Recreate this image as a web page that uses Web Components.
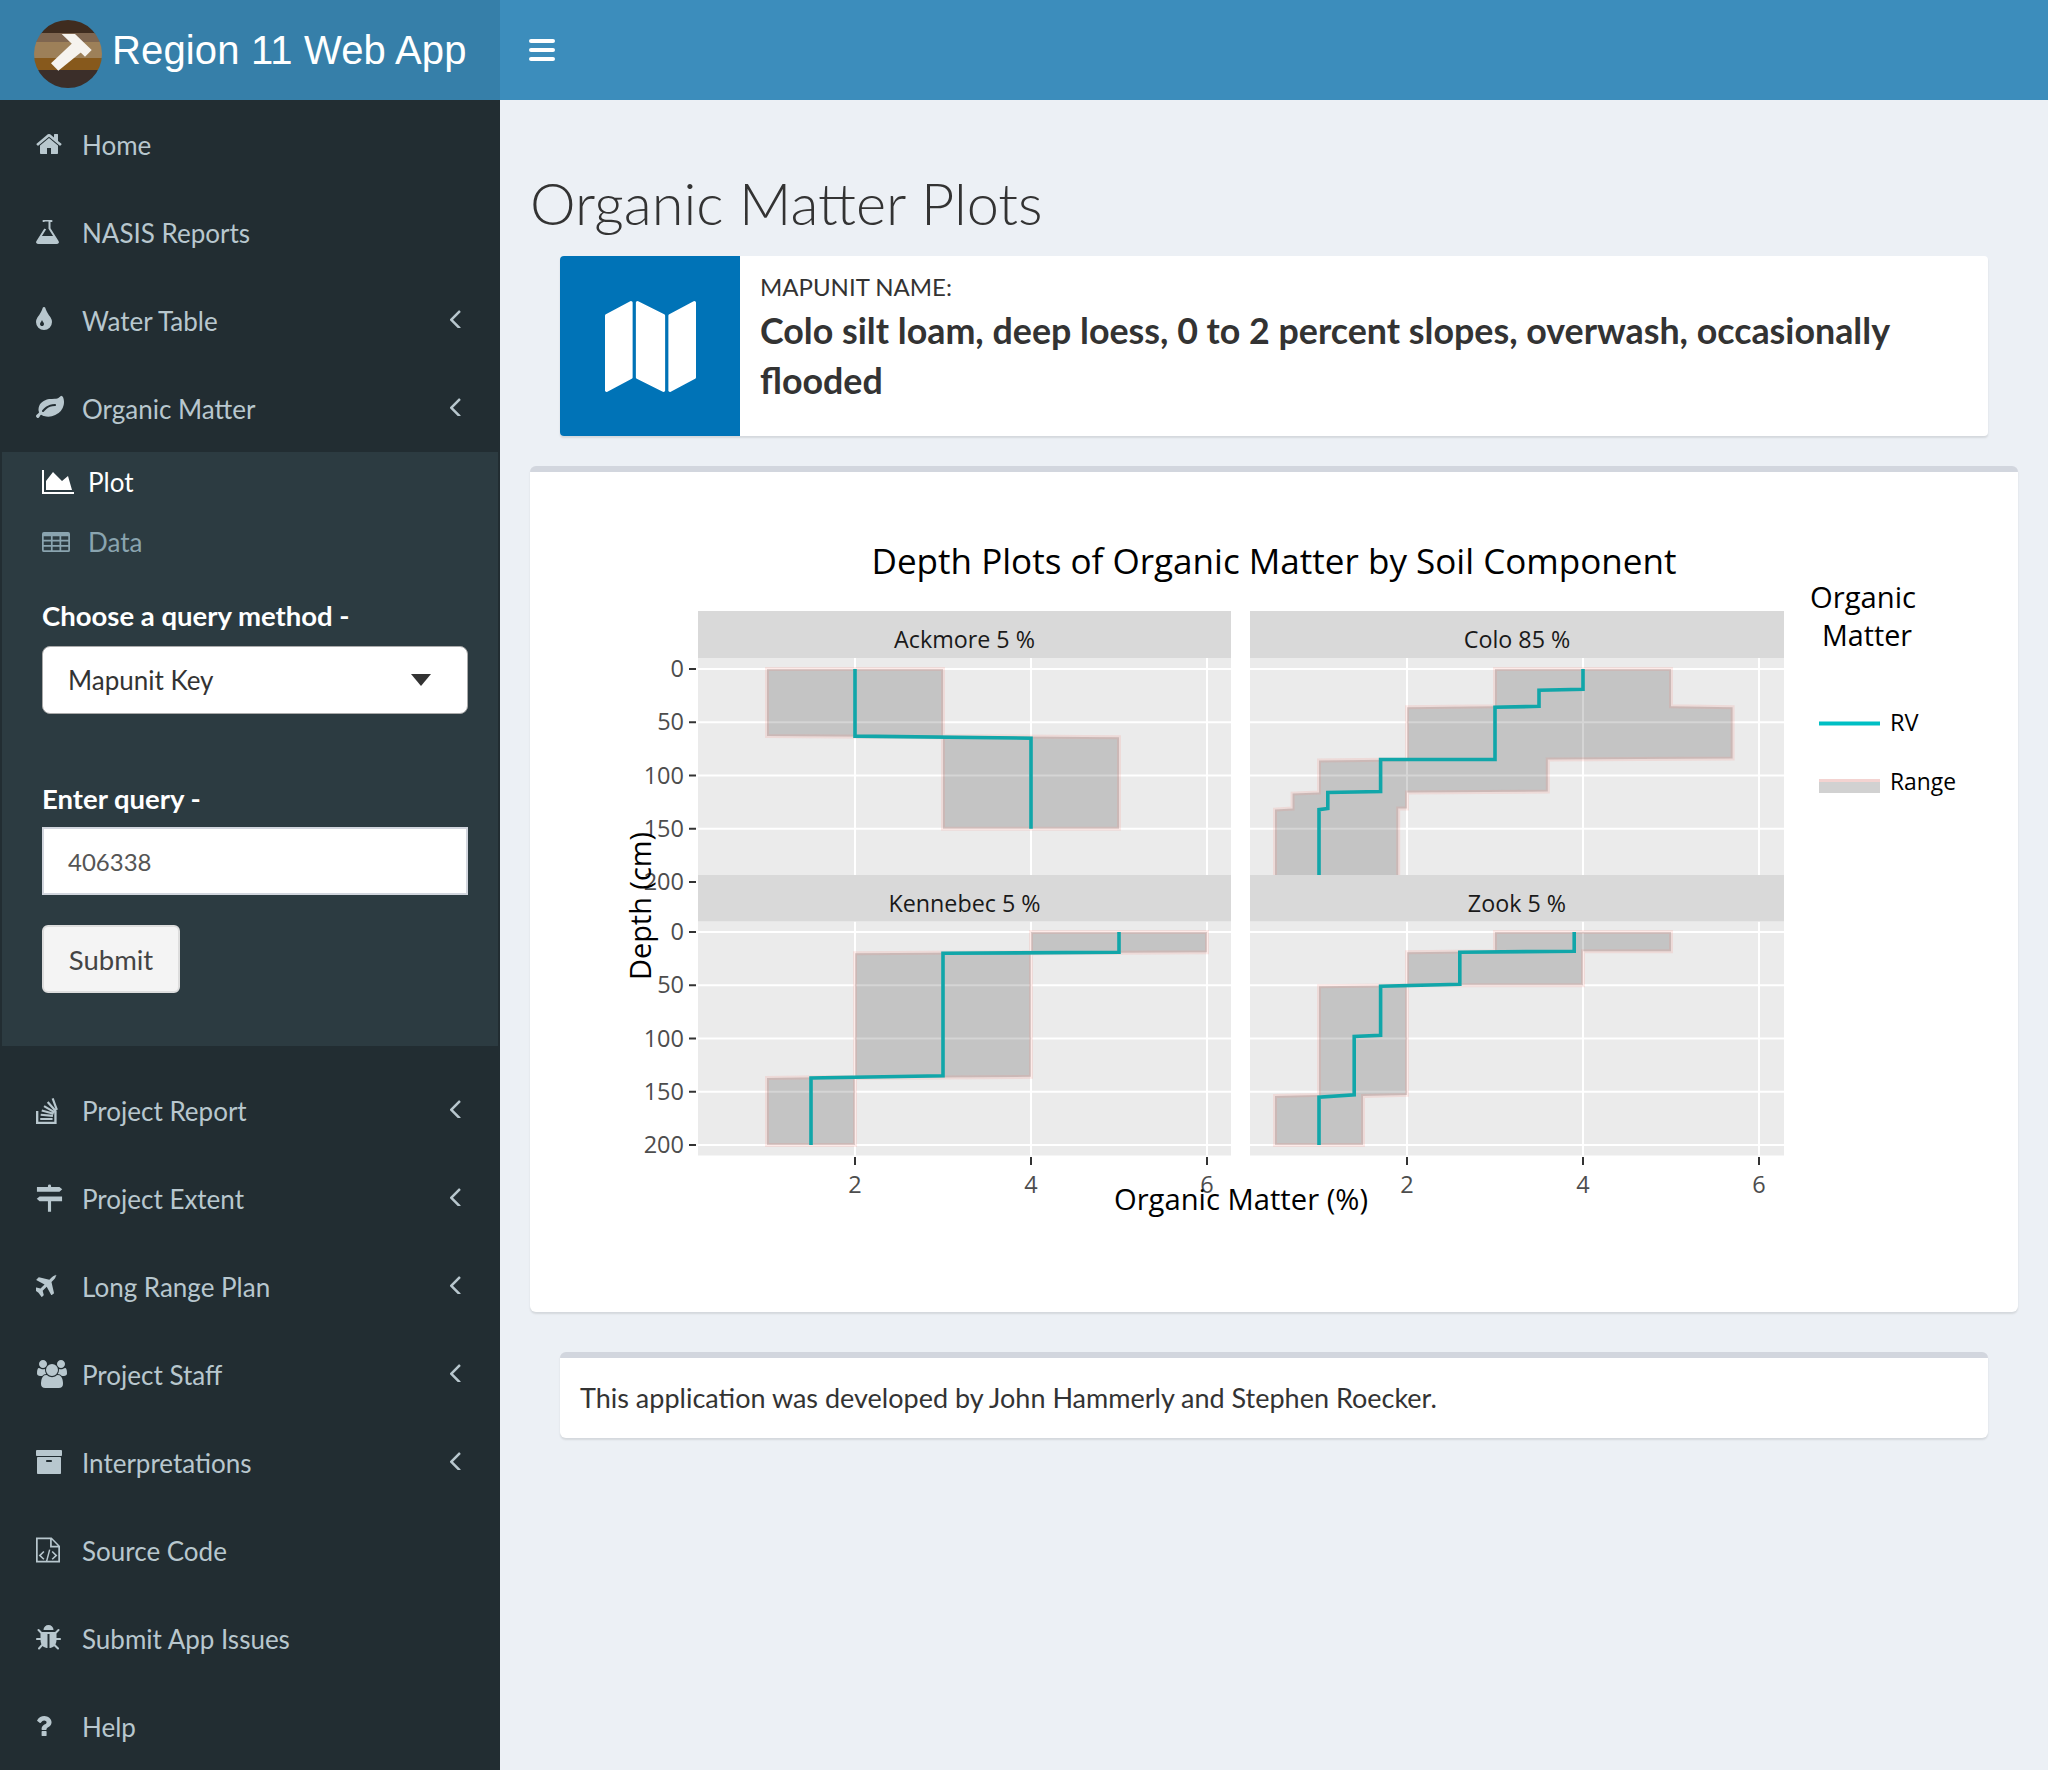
<!DOCTYPE html>
<html>
<head>
<meta charset="utf-8">
<title>Region 11 Web App</title>
<style>
  html, body { margin: 0; padding: 0; background: #ecf0f5; }
  body { font-family: "Lato", "Open Sans", sans-serif; color: #333; }
</style>
</head>
<body>
<app-shell>
  <app-logo slot="logo">Region 11 Web App</app-logo>
  <app-navbar slot="navbar"></app-navbar>
  <side-menu slot="side">
    <side-item icon="home" href="#">Home</side-item>
    <side-item icon="flask">NASIS Reports</side-item>
    <side-item icon="tint" arrow>Water Table</side-item>
    <side-item icon="leaf" arrow>Organic Matter</side-item>
    <side-tree>
      <sub-link icon="area" active>Plot</sub-link>
      <sub-link icon="table">Data</sub-link>
      <query-form></query-form>
    </side-tree>
    <side-item icon="stack" arrow>Project Report</side-item>
    <side-item icon="signs" arrow>Project Extent</side-item>
    <side-item icon="plane" arrow>Long Range Plan</side-item>
    <side-item icon="users" arrow>Project Staff</side-item>
    <side-item icon="archive" arrow>Interpretations</side-item>
    <side-item icon="file">Source Code</side-item>
    <side-item icon="bug">Submit App Issues</side-item>
    <side-item icon="question">Help</side-item>
  </side-menu>
  <page-body slot="main">
    <span slot="title">Organic Matter Plots</span>
    <info-box slot="info" label="Mapunit name:">Colo silt loam, deep loess, 0 to 2 percent slopes, overwash, occasionally flooded</info-box>
    <plot-box slot="plot"><depth-plot></depth-plot></plot-box>
    <note-box slot="note">This application was developed by John Hammerly and Stephen Roecker.</note-box>
  </page-body>
</app-shell>

<script>
const ICONS = {
  home: ['64 0 1664 1792', '<path d="M1472 992v480q0 26-19 45t-45 19h-384v-384h-256v384h-384q-26 0-45-19t-19-45v-480q0-1 .5-3t.5-3l575-474 575 474q1 2 1 6zm223-69l-62 74q-8 9-21 11h-3q-13 0-21-7l-692-577-692 577q-12 8-24 7-13-2-21-11l-62-74q-8-10-7-23.500t11-21.500l719-599q32-26 76-26t76 26l244 204v-195q0-14 9-23t23-9h192q14 0 23 9t9 23v408l219 182q10 8 11 21.500t-7 23.500z"/>'],
  flask: ['160 0 1472 1792', '<path d="M1591 1448q56 89 21.500 152.500t-140.500 63.500h-1152q-106 0-140.500-63.500t21.500-152.500l503-793v-399h-64q-26 0-45-19t-19-45 19-45 45-19h512q26 0 45 19t19 45-19 45-45 19h-64v399zm-779-725l-272 429h712l-272-429-20-31v-467h-256v467z"/>'],
  tint: ['384 0 1024 1792', '<path d="M896 1152q0-36-20-69-1-1-15.500-22.500t-25.500-38-25-44-21-50.500q-4-16-21-16t-21 16q-7 23-21 50.500t-25 44-25.500 38-15.500 22.500q-20 33-20 69 0 53 37.500 90.500t90.500 37.500 90.500-37.500 37.500-90.500zm512-128q0 212-150 362t-362 150-362-150-150-362q0-145 81-275 6-9 62.500-90.500t101-151 99.500-178 83-201.500q9-30 34-47t51-17 51.500 17 33.500 47q28 93 83 201.500t99.500 178 101 151 62.500 90.500q81 127 81 275z"/>'],
  leaf: ['0 0 1792 1792', '<path d="M1280 704q0-26-19-45t-45-19q-172 0-318 49.500t-259.500 134-235.500 219.500q-19 21-19 45 0 26 19 45t45 19q24 0 45-19 27-24 74-71t67-66q137-124 268.500-176t313.500-52q26 0 45-19t19-45zm512-198q0 95-20 193-46 224-184.500 383t-357.500 268q-214 108-438 108-148 0-286-47-15-5-88-42t-96-37q-16 0-39.500 32t-45 70-52.500 70-60 32q-43 0-63.500-17.500t-45.500-59.500q-2-4-6-11t-5.500-10-3-9.500-1.500-13.500q0-35 31-73.500t68-65.500 68-56 31-48q0-4-14-38t-16-44q-9-51-9-104 0-115 43.500-220t119-184.500 170.500-139 204-95.500q55-18 145-25.500t179.500-9 178.500-6 163.500-24 113.500-56.500l29.500-29.500t29.500-28 27-20 36.500-16 43.500-4.500q39 0 70.500 46t47.500 112 24 124 8 96z"/>'],
  plane: ['128 0 1408 1792', '<path d="M1376 160q44 52 12 148t-108 172l-161 161 160 696q5 19-12 33l-128 96q-7 6-19 6-4 0-7-1-15-3-21-16l-279-508-259 259 71 260q4 14-6 26l-96 96q-9 9-23 9h-2q-15-2-24-13l-189-252-252-189q-11-7-13-23-1-13 9-25l96-97q9-9 23-9 6 0 8 1l260 71 259-259-508-279q-14-8-17-24-2-16 9-27l128-128q14-13 30-8l665 159 160-160q76-76 172-108t148 12z"/>'],
  users: ['0 0 2048 1792', '<path d="M657 896q-162 5-265 128h-134q-82 0-138-40.500t-56-118.500q0-353 124-353 6 0 43.500 21t97.500 42.500 119 21.500q67 0 133-23-5 37-5 66 0 139 81 256zm1071 637q0 120-73 189.500t-194 69.500h-874q-121 0-194-69.500t-73-189.500q0-53 3.500-103.500t14-109 26.500-108.500 43-97.500 62-81 85.500-53.500 111.500-20q10 0 43 21.500t73 48 107 48 135 21.500 135-21.500 107-48 73-48 43-21.500q61 0 111.500 20t85.500 53.500 62 81 43 97.500 26.500 108.500 14 109 3.500 103.500zm-1024-1277q0 106-75 181t-181 75-181-75-75-181 75-181 181-75 181 75 75 181zm704 384q0 159-112.500 271.500t-271.500 112.500-271.500-112.500-112.500-271.500 112.500-271.500 271.500-112.500 271.500 112.500 112.500 271.500zm576 225q0 78-56 118.500t-138 40.500h-134q-103-123-265-128 81-117 81-256 0-29-5-66 66 23 133 23 59 0 119-21.500t97.500-42.500 43.500-21q124 0 124 353zm-128-609q0 106-75 181t-181 75-181-75-75-181 75-181 181-75 181 75 75 181z"/>'],
  archive: ['64 0 1664 1792', '<path d="M1088 832q0-26-19-45t-45-19h-256q-26 0-45 19t-19 45 19 45 45 19h256q26 0 45-19t19-45zm576-192v960q0 26-19 45t-45 19h-1408q-26 0-45-19t-19-45v-960q0-26 19-45t45-19h1408q26 0 45 19t19 45zm64-448v256q0 26-19 45t-45 19h-1536q-26 0-45-19t-19-45v-256q0-26 19-45t45-19h1536q26 0 45 19t19 45z"/>'],
  bug: ['96 0 1600 1792', '<path d="M1696 960q0 26-19 45t-45 19h-224q0 171-67 290l208 209q19 19 19 45t-19 45q-18 19-45 19t-45-19l-198-197q-5 5-15 13t-42 28.500-65 36.500-82 29-97 13v-896h-128v896q-51 0-101.500-13.500t-87-33-66-39-43.500-32.500l-15-14-183 207q-20 21-48 21-24 0-43-16-19-18-20.500-44.500t15.500-46.500l202-227q-58-114-58-274h-224q-26 0-45-19t-19-45 19-45 45-19h224v-294l-173-173q-19-19-19-45t19-45 45-19 45 19l173 173h844l173-173q19-19 45-19t45 19 19 45-19 45l-173 173v294h224q26 0 45 19t19 45zm-480-576h-640q0-133 93.500-226.500t226.500-93.500 226.500 93.500 93.500 226.500z"/>'],
  question: ['410 0 1000 1792', '<path d="M1088 1256v240q0 16-12 28t-28 12h-240q-16 0-28-12t-12-28v-240q0-16 12-28t28-12h240q16 0 28 12t12 28zm316-600q0 54-15.500 101t-35 76.500-55 59.500-57.500 43.500-61 35.500q-41 23-68.500 65t-27.500 67q0 17-12 32.500t-28 15.500h-240q-15 0-25.500-18.500t-10.500-37.500v-45q0-83 65-156.500t143-108.500q59-27 84-56t25-76q0-42-46.500-74t-107.500-32q-65 0-108 29-35 25-107 115-13 16-31 16-12 0-25-8l-164-125q-13-10-15.500-25t5.500-28q160-266 464-266 80 0 161 31t146 83 106 127.500 41 158.500z"/>'],
  area: ['0 0 2048 1792', '<path d="M2048 1536v128h-2048v-1536h128v1408h1920zm-384-1024l256 896h-1664v-576l448-576 576 576z"/>'],
  table: ['0 0 1792 1792', '<path fill-rule="evenodd" d="M120 256h1552a120 120 0 0 1 120 120v1040a120 120 0 0 1-120 120H120a120 120 0 0 1-120-120V376a120 120 0 0 1 120-120zM110 520v230h460V520zm570 0v230h440V520zm550 0v230h450V520zM110 860v230h460V860zm570 0v230h440V860zm550 0v230h450V860zM110 1200v220h460v-220zm570 0v220h440v-220zm550 0v220h450v-220z"/>'],
  stack: ['0 0 1472 1792', '<path d="M0 960h150v680h1020V960h150v830H0z"/><path d="M270 1400h790v140H270zM305 1130l785 75-13 140-785-75zM385 860l760 205-37 135-760-205zM550 590l680 395-70 120-680-395zM800 340l525 590-105 93-525-590zM1130 130l270 740-130 48-270-740z"/>'],
  signs: ['0 0 1728 1792', '<path d="M764 1100h200v680H764zM764 120q0-90 100-90t100 90v70H764zM60 190h1440l180 150-180 150H60zM228 800h1440v300H228L48 950z"/>'],
  file: ['0 0 1536 1792', '<path fill-rule="evenodd" d="M0 100h1000l536 536v1056H0zM110 210v1372h1316V730H900V210zM1010 240v380h380z"/><path d="M470 960l70 70-220 210 220 210-70 70-300-280zM1070 960l-70 70 220 210-220 210 70 70 300-280zM830 860l90 20-200 760-90-20z"/>']
};

const iconSvg = (name, height) => {
  const [vb, body] = ICONS[name];
  const p = vb.split(' ').map(Number);
  const width = height * p[2] / p[3];
  return `<svg xmlns="http://www.w3.org/2000/svg" width="${width}" height="${height}" viewBox="${vb}" fill="currentColor">${body}</svg>`;
};

class AppShell extends HTMLElement {
  constructor() {
    super();
    this.attachShadow({ mode: 'open' }).innerHTML = `
      <style>
        :host { display: grid; grid-template-columns: 500px 1fr; grid-template-rows: 100px 1670px; width: 2048px; height: 1770px; overflow: hidden; }
        ::slotted([slot=side]) { overflow: hidden; }
      </style>
      <slot name="logo"></slot><slot name="navbar"></slot><slot name="side"></slot><slot name="main"></slot>`;
  }
}

class AppLogo extends HTMLElement {
  constructor() {
    super();
    this.attachShadow({ mode: 'open' }).innerHTML = `
      <style>
        :host { display: flex; align-items: center; background: #367fa9; color: #fff; padding-left: 34px; font: 40px "Liberation Sans", Arial, sans-serif; }
        svg { margin: 8px 10px 0 0; flex: none; }
        span { letter-spacing: .15px; }
      </style>
      <svg width="68" height="68" viewBox="0 0 68 68">
        <defs><clipPath id="c"><circle cx="34" cy="34" r="34"/></clipPath></defs>
        <g clip-path="url(#c)">
          <rect width="68" height="14" fill="#3f2c1f"/>
          <rect y="13" width="68" height="10" fill="#7f6650"/>
          <rect y="22" width="68" height="16" fill="#9d8059"/>
          <rect y="38" width="68" height="12" fill="#87591c"/>
          <rect y="50" width="68" height="18" fill="#3b2e29"/>
        </g>
        <path d="M17 43.300L24.300 50.700 47.700 31.700 39.300 22.300z" fill="#f6f3ee"/>
        <path d="M27.700 14H41L57.700 30 51 36.700 36 22z" fill="#f6f3ee"/>
      </svg>
      <span><slot></slot></span>`;
  }
}

class AppNavbar extends HTMLElement {
  constructor() {
    super();
    this.attachShadow({ mode: 'open' }).innerHTML = `
      <style>
        :host { display: flex; align-items: center; background: #3c8dbc; padding-left: 29px; }
        .bars { display: flex; flex-direction: column; gap: 5px; }
        i { display: block; width: 26px; height: 4px; border-radius: 2px; background: #fff; }
      </style>
      <div class="bars"><i></i><i></i><i></i></div>`;
  }
}

class SideMenu extends HTMLElement {
  constructor() {
    super();
    this.attachShadow({ mode: 'open' }).innerHTML = `
      <style>:host { display: block; background: #222d32; }</style><slot></slot>`;
  }
}

class SideItem extends HTMLElement {
  constructor() {
    super();
    const arrow = this.hasAttribute('arrow')
      ? '<svg class="arrow" width="11" height="19" viewBox="640 400 580 990" fill="currentColor"><path d="M1203 544q0 13-10 23l-393 393 393 393q10 10 10 23t-10 23l-50 50q-10 10-23 10t-23-10l-466-466q-10-10-10-23t10-23l466-466q10-10 23-10t23 10l50 50q10 10 10 23z"/></svg>'
      : '';
    this.attachShadow({ mode: 'open' }).innerHTML = `
      <style>
        :host { display: flex; align-items: center; height: 88px; padding-left: 36px; color: #b8c7ce; font-size: 26px; position: relative; }
        .ico { width: 46px; flex: none; display: flex; }
        .lbl { padding-top: 2px; }
        .arrow { position: absolute; left: 450px; top: 33px; }
      </style>
      <span class="ico">${iconSvg(this.getAttribute('icon'), 28)}</span><span class="lbl"><slot></slot></span>${arrow}`;
  }
}

class SideTree extends HTMLElement {
  constructor() {
    super();
    this.attachShadow({ mode: 'open' }).innerHTML = `
      <style>:host { display: block; margin: 0 2px 20px; height: 594px; background: #2c3b41; padding-top: 0; }</style><slot></slot>`;
  }
}

class SubLink extends HTMLElement {
  constructor() {
    super();
    this.attachShadow({ mode: 'open' }).innerHTML = `
      <style>
        :host { display: flex; align-items: center; height: 60px; padding-left: 40px; font-size: 26px; color: #8aa4af; }
        :host([active]) { color: #fff; }
        .ico { width: 46px; flex: none; display: flex; }
      </style>
      <span class="ico">${iconSvg(this.getAttribute('icon'), 28)}</span><slot></slot>`;
  }
}

const formTemplate = document.createElement('template');
formTemplate.innerHTML = `
  <style>
    :host { display: block; padding: 29px 30px 0 40px; font-size: 26px; }
    label { display: block; color: #fff; font-weight: 700; font-size: 27.500px; line-height: 30px; height: 30px; }
    .select { box-sizing: border-box; height: 68px; margin-top: 15px; background: #fff; border: 1px solid #aaa; border-radius: 8px; color: #333; display: flex; align-items: center; justify-content: space-between; padding: 0 36px 0 25px; }
    .select i { border: 10px solid transparent; border-top: 12px solid #333; border-bottom: 0; }
    .input { box-sizing: border-box; height: 68px; margin-top: 13px; background: #fff; border: 2px solid #d2d6de; color: #555; display: flex; align-items: center; padding-left: 24px; font-size: 24px; }
    .second { margin-top: 70px; }
    .btn { box-sizing: border-box; width: 138px; height: 68px; margin-top: 30px; background: #f4f4f4; border: 2px solid #ddd; border-radius: 6px; color: #444; font-size: 27.500px; display: flex; align-items: center; justify-content: center; }
  </style>
  <label>Choose a query method -</label>
  <div class="select"><span>Mapunit Key</span><i></i></div>
  <label class="second">Enter query -</label>
  <div class="input">406338</div>
  <div class="btn">Submit</div>`;

class QueryForm extends HTMLElement {
  constructor() {
    super();
    this.attachShadow({ mode: 'open' }).appendChild(formTemplate.content.cloneNode(true));
  }
}

class PageBody extends HTMLElement {
  constructor() {
    super();
    this.attachShadow({ mode: 'open' }).innerHTML = `
      <style>
        :host { display: flex; flex-direction: column; padding: 0 30px; }
        .title { font-size: 57.700px; font-weight: 300; line-height: 70px; margin-top: 68px; height: 88px; color: #333; }
        ::slotted([slot=info]) { margin: 0 30px; }
        ::slotted([slot=plot]) { margin-top: 30px; }
        ::slotted([slot=note]) { margin: 40px 30px 0; }
      </style>
      <div class="title"><slot name="title"></slot></div>
      <slot name="info"></slot><slot name="plot"></slot><slot name="note"></slot>`;
  }
}

class InfoBox extends HTMLElement {
  constructor() {
    super();
    this.attachShadow({ mode: 'open' }).innerHTML = `
      <style>
        :host { display: flex; height: 180px; background: #fff; border-radius: 4px; box-shadow: 0 2px 2px rgba(0,0,0,.1); overflow: hidden; }
        .icon { width: 180px; flex: none; background: #0073b7; color: #fff; display: flex; align-items: center; justify-content: center; }
        .text { padding: 16px 20px 0 20px; }
        .label { text-transform: uppercase; font-size: 24px; line-height: 30px; }
        .value { font-size: 35.800px; font-weight: 700; line-height: 50px; margin-top: 4px; }
      </style>
      <div class="icon"><svg width="91" height="91" viewBox="0 0 1792 1792" fill="currentColor"><path d="M512 0q13 0 22.500 9.500t9.500 22.500v1472q0 20-17 28l-480 256q-7 4-15 4-13 0-22.500-9.500t-9.500-22.500v-1472q0-20 17-28l480-256q7-4 15-4zm1248 0q13 0 22.500 9.500t9.500 22.500v1472q0 20-17 28l-480 256q-7 4-15 4-13 0-22.500-9.500t-9.500-22.500v-1472q0-20 17-28l480-256q7-4 15-4zm-1120 0q8 0 14 3l512 256q18 10 18 29v1472q0 13-9.500 22.500t-22.500 9.500q-8 0-14-3l-512-256q-18-10-18-29v-1472q0-13 9.500-22.500t22.500-9.500z"/></svg></div>
      <div class="text"><div class="label">${this.getAttribute('label')}</div><div class="value"><slot></slot></div></div>`;
  }
}

class PlotBox extends HTMLElement {
  constructor() {
    super();
    this.attachShadow({ mode: 'open' }).innerHTML = `
      <style>
        :host { display: block; height: 846px; box-sizing: border-box; background: #fff; border-top: 6px solid #d2d6de; border-radius: 6px; box-shadow: 0 2px 2px rgba(0,0,0,.1); overflow: hidden; }
      </style><slot></slot>`;
  }
}

class NoteBox extends HTMLElement {
  constructor() {
    super();
    this.attachShadow({ mode: 'open' }).innerHTML = `
      <style>
        :host { display: flex; align-items: center; height: 86px; box-sizing: border-box; background: #fff; border-top: 6px solid #d2d6de; border-radius: 6px; box-shadow: 0 2px 2px rgba(0,0,0,.1); padding: 0 20px 2px; font-size: 27px; }
      </style><slot></slot>`;
  }
}

// plot data, read off the reference: ranges as [value, depth] outlines, rv as the step line
const PANELS = [
  { name: 'Ackmore 5 %', col: 0, row: 0,
    range: [[1,0],[1,63],[3,64],[3,150],[5,150],[5,64],[3,63],[3,0]],
    rv: [[2,0],[2,63],[4,65],[4,150]] },
  { name: 'Colo 85 %', col: 1, row: 0,
    range: [[3,0],[3,35],[2,36],[2,85],[1,86],[1,116],[.7,117],[.7,131],[.5,132],[.5,200],[1.9,200],[1.9,131],[2,131],[2,116],[3.6,115],[3.6,85],[5.7,84],[5.7,36],[5,35],[5,0]],
    rv: [[4,0],[4,19],[3.5,20],[3.5,35],[3,36],[3,85],[1.7,85],[1.7,115],[1.1,116],[1.1,131],[1,132],[1,200]] },
  { name: 'Kennebec 5 %', col: 0, row: 1,
    range: [[4,0],[4,19],[2,20],[2,136],[1,137],[1,200],[2,200],[2,137],[4,136],[4,20],[6,19],[6,0]],
    rv: [[5,0],[5,19],[3,20],[3,135],[1.5,137],[1.5,200]] },
  { name: 'Zook 5 %', col: 1, row: 1,
    range: [[3,0],[3,18],[2,19],[2,50],[1,51],[1,153],[.5,154],[.5,200],[1.5,200],[1.5,154],[2,153],[2,50],[4,50],[4,18],[5,18],[5,0]],
    rv: [[3.9,0],[3.9,18],[2.6,19],[2.6,49],[1.7,51],[1.7,97],[1.4,98],[1.4,153],[1,155],[1,200]] }
];
const COLS = [{ left: 698, right: 1231, x2: 855 }, { left: 1250, right: 1784, x2: 1407 }];
const ROWS = [{ strip: 611, top: 658, bottom: 875, y0: 669 }, { strip: 875, top: 921.5, bottom: 1155.5, y0: 932 }];
const PER_UNIT = 88;
const PER_CM = 1.065;

const txt = (x, y, s, size, opts = {}) => {
  const anchor = opts.anchor || 'middle';
  const len = opts.len ? ` textLength="${opts.len}" lengthAdjust="spacingAndGlyphs"` : '';
  const tr = opts.rotate ? ` transform="rotate(-90 ${x} ${y})"` : '';
  return `<text x="${x}" y="${y}" font-size="${size}" text-anchor="${anchor}" fill="${opts.fill || '#000'}"${len}${tr}>${s}</text>`;
};

const drawPanel = (p) => {
  const c = COLS[p.col];
  const r = ROWS[p.row];
  const sx = (v) => c.x2 + (v - 2) * PER_UNIT;
  const sy = (d) => r.y0 + d * PER_CM;
  const pts = (a) => a.map(([v, d]) => `${sx(v).toFixed(1)},${sy(d).toFixed(1)}`).join(' ');
  let s = `<rect x="${c.left}" y="${r.top}" width="${c.right - c.left}" height="${r.bottom - r.top}" fill="#ebebeb"/>`;
  [0, 50, 100, 150, 200].forEach((d) => {
    s += `<line x1="${c.left}" x2="${c.right}" y1="${sy(d)}" y2="${sy(d)}" stroke="#fff" stroke-width="2"/>`;
  });
  [2, 4, 6].forEach((v) => {
    s += `<line x1="${sx(v)}" x2="${sx(v)}" y1="${r.top}" y2="${r.bottom}" stroke="#fff" stroke-width="2"/>`;
  });
  s += `<polygon points="${pts(p.range)}" fill="rgba(0,0,0,.166)" stroke="rgba(248,118,109,.15)" stroke-width="4"/>`;
  s += `<polyline points="${pts(p.rv)}" fill="none" stroke="#11a6a9" stroke-width="3.600"/>`;
  s += `<rect x="${c.left}" y="${r.strip}" width="${c.right - c.left}" height="${r.top - r.strip}" fill="#d9d9d9"/>`;
  s += txt((c.left + c.right) / 2, r.strip + 37, p.name, 23.300, { fill: '#1a1a1a' });
  return s;
};

const drawAxes = () => {
  let s = '';
  ROWS.forEach((r) => {
    [0, 50, 100, 150, 200].forEach((d) => {
      const y = r.y0 + d * PER_CM;
      s += `<line x1="689" x2="696" y1="${y}" y2="${y}" stroke="#333" stroke-width="2"/>`;
      s += txt(684, y + 8, String(d), 23.500, { anchor: 'end', fill: '#4d4d4d' });
    });
  });
  COLS.forEach((c) => {
    [2, 4, 6].forEach((v) => {
      const x = c.x2 + (v - 2) * PER_UNIT;
      s += `<line x1="${x}" x2="${x}" y1="1157" y2="1165" stroke="#333" stroke-width="2"/>`;
      s += txt(x, 1193, String(v), 23.500, { fill: '#4d4d4d' });
    });
  });
  return s;
};

class DepthPlot extends HTMLElement {
  constructor() {
    super();
    this.attachShadow({ mode: 'open' }).innerHTML = `
      <style>
        :host { display: block; }
        svg { display: block; font-family: "Open Sans", sans-serif; }
      </style>
      <svg width="1488" height="840" viewBox="530 472 1488 840">
        ${txt(1274, 574, 'Depth Plots of Organic Matter by Soil Component', 34, { len: 805 })}
        ${PANELS.map(drawPanel).join('')}
        ${drawAxes()}
        ${txt(651, 906, 'Depth (cm)', 29, { rotate: true, len: 148 })}
        ${txt(1241, 1210, 'Organic Matter (%)', 29, { len: 254 })}
        ${txt(1863, 608, 'Organic', 29, { len: 106 })}
        ${txt(1867, 646, 'Matter', 29, { len: 90 })}
        <line x1="1819" x2="1880" y1="723.500" y2="723.500" stroke="#00bfc4" stroke-width="4"/>
        ${txt(1890, 731, 'RV', 23.500, { anchor: 'start' })}
        <rect x="1819" y="779" width="61" height="14" fill="#d1d1d1"/>
        <rect x="1819" y="779" width="61" height="3" fill="#f3d3d1"/>
        ${txt(1890, 790, 'Range', 23.500, { anchor: 'start', len: 66 })}
      </svg>`;
  }
}

customElements.define('app-shell', AppShell);
customElements.define('app-logo', AppLogo);
customElements.define('app-navbar', AppNavbar);
customElements.define('side-menu', SideMenu);
customElements.define('side-item', SideItem);
customElements.define('side-tree', SideTree);
customElements.define('sub-link', SubLink);
customElements.define('query-form', QueryForm);
customElements.define('page-body', PageBody);
customElements.define('info-box', InfoBox);
customElements.define('plot-box', PlotBox);
customElements.define('note-box', NoteBox);
customElements.define('depth-plot', DepthPlot);
</script>
</body>
</html>
